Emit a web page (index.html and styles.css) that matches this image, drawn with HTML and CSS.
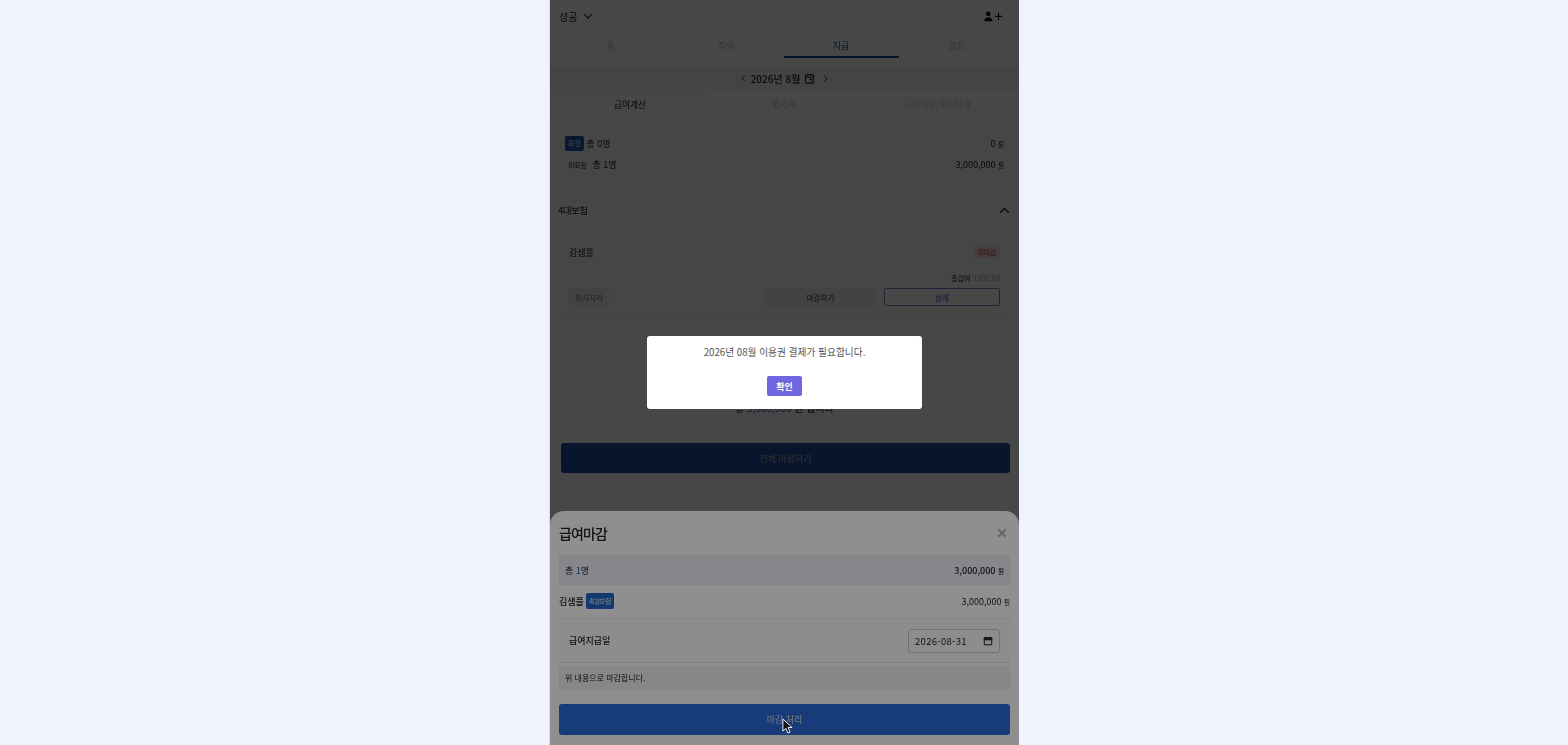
FILE: index.html
```html
<!DOCTYPE html>
<html lang="ko">
<head>
  <meta charset="UTF-8" />
  <meta name="viewport" content="width=device-width, initial-scale=1.0"/>
  <title>급여마감</title>
  <link rel="stylesheet" href="styles.css">
</head>
<body>
  <div class="phone">

    <div class="app">
      <header class="top">
        <div class="company">성공
          <svg class="icon-chev" viewBox="0 0 12 8"><path d="M1.5 1.5 6 6l4.5-4.5" /></svg>
        </div>
        <svg class="icon-user" viewBox="0 0 24 14">
          <circle cx="6" cy="3.6" r="3" />
          <path d="M.8 13c0-3.4 2.3-5 5.2-5s5.2 1.6 5.2 5z" />
          <path d="M19 2.2v9.2M14.4 6.8h9.2" class="plus" />
        </svg>
      </header>

      <nav class="tabs">
        <div class="tab">홈</div>
        <div class="tab">직원</div>
        <div class="tab active">지급</div>
        <div class="tab">설정</div>
      </nav>

      <div class="month">
        <svg class="icon-small" viewBox="0 0 8 12"><path d="M6 2 2 6l4 4" /></svg>
        <span>2026년 8월</span>
        <svg class="icon-cal" viewBox="0 0 12 12">
          <rect x="1.5" y="2" width="9" height="9" rx="1" />
          <path d="M1.5 4.6h9M4 .8v2M8 .8v2M6 7h2.5v2" />
        </svg>
        <svg class="icon-small next" viewBox="0 0 8 12"><path d="M2 2l4 4-4 4" /></svg>
      </div>

      <div class="segments">
        <div class="segment on">급여계산</div>
        <div class="segment">명세서</div>
        <div class="segment">급여대장/퇴직대장</div>
      </div>

      <section class="summary">
        <div class="sum-row">
          <div class="sum-left"><span class="chip-done">확정</span><span>총 0명</span></div>
          <div class="amount">0 <small>원</small></div>
        </div>
        <div class="sum-row">
          <div class="sum-left"><span class="chip-open">미확정</span><span>총 1명</span></div>
          <div class="amount">3,000,000 <small>원</small></div>
        </div>
      </section>

      <div class="group-head">
        <span>4대보험</span>
        <svg class="icon-up" viewBox="0 0 14 9"><path d="M1.5 7.5 7 2l5.5 5.5" /></svg>
      </div>

      <section class="emp-card">
        <div class="emp-top">
          <span class="emp-name">김샘플</span>
          <span class="badge-red">미마감</span>
        </div>
        <div class="emp-total"><b>총급여</b> <span>3,000,000</span></div>
        <div class="emp-actions">
          <button class="btn-gray small">퇴사처리</button>
          <div class="emp-right">
            <button class="btn-gray wide">마감하기</button>
            <button class="btn-line">상세</button>
          </div>
        </div>
      </section>

      <div class="grand-total">총 <em>3,000,000</em> 원 입니다</div>
      <button class="btn-all">전체 마감하기</button>
    </div>

    <div class="dim"></div>

    <section class="sheet">
      <div class="sheet-head">
        <h2>급여마감</h2>
        <svg class="icon-x" viewBox="0 0 12 12"><path d="M1.5 1.5l9 9M10.5 1.5l-9 9" /></svg>
      </div>
      <div class="sheet-sum">
        <span>총 <em>1</em>명</span>
        <span class="amount">3,000,000 <small>원</small></span>
      </div>
      <div class="sheet-emp">
        <div class="sum-left"><span class="emp-strong">김샘플</span><span class="chip-ins">4대보험</span></div>
        <span class="amount">3,000,000 <small>원</small></span>
      </div>
      <div class="pay-date">
        <label>급여지급일</label>
        <div class="date-field">2026-08-31
          <svg class="icon-date" viewBox="0 0 12 12">
            <path d="M1.5 2.5h9v8h-9z" />
            <path class="date-top" d="M1.5 2.2h9v2.4h-9z" />
            <path d="M3.6.8v1.6M8.4.8v1.6" />
          </svg>
        </div>
      </div>
      <div class="notice">위 내용으로 마감합니다.</div>
      <button class="btn-submit">마감 처리</button>
    </section>

    <div class="dim-top">
      <div class="alert">
        <p>2026년 08월 이용권 결제가 필요합니다.</p>
        <button class="btn-ok">확인</button>
      </div>
    </div>

    <svg class="cursor" viewBox="0 0 12 18">
      <path d="M1 1v13l3.2-3 2.2 5.2 2.4-1-2.2-5.1H11z" />
    </svg>
  </div>
</body>
</html>
```

FILE: styles.css
```css
* {
  box-sizing: border-box;
}
body {
  margin: 0;
  height: 745px;
  overflow: hidden;
  background: #eff3fe;
  font-family: "Noto Sans CJK KR", "Noto Sans", sans-serif;
  color: #222;
  display: flex;
  justify-content: center;
}
button {
  font-family: inherit;
  border: 0;
}
em {
  font-style: normal;
}
svg {
  fill: none;
  stroke: currentColor;
}
.phone {
  position: relative;
  width: 470px;
  height: 745px;
  overflow: hidden;
  background: #fff;
  border-left: 1px solid #ddd;
}
.app {
  height: 100%;
  filter: blur(0.7px);
}

/* header */
.top {
  height: 33px;
  padding: 0 16px 0 9px;
  display: flex;
  align-items: center;
  justify-content: space-between;
}
.company {
  display: flex;
  align-items: center;
  gap: 6px;
  font-size: 10px;
}
.icon-chev {
  width: 10px;
  height: 7px;
  stroke-width: 1.5;
}
.icon-user {
  width: 20px;
  height: 11px;
  fill: #111;
  stroke: none;
}
.icon-user .plus {
  stroke: #111;
  stroke-width: 1.4;
  fill: none;
}
.tabs {
  height: 25px;
  display: flex;
  padding: 0 5px 0 3px;
}
.tab {
  flex: 1;
  text-align: center;
  font-size: 9px;
  line-height: 25px;
  color: #c0c0c0;
}
.tab.active {
  color: #1f4fa0;
  border-bottom: 2px solid #1a4a9c;
}

/* month */
.month {
  margin-top: 8px;
  height: 24px;
  background: #f3f5f9;
  display: flex;
  align-items: center;
  justify-content: center;
  gap: 4px;
  font-size: 10px;
  font-weight: 500;
}
.icon-small {
  width: 7px;
  height: 9px;
  stroke-width: 1.3;
}
.icon-small.next {
  margin-left: 3px;
}
.icon-cal {
  width: 11px;
  height: 11px;
  stroke-width: 1.2;
}
.segments {
  margin: 3px 4px 0 3px;
  height: 24px;
  display: flex;
}
.segment {
  flex: 1;
  text-align: center;
  font-size: 8.7px;
  line-height: 24px;
  color: #c4c4c4;
}
.segment.on {
  background: #fff;
  color: #222;
  border-radius: 4px;
  box-shadow: 0 0 3px rgba(0,0,0,0.12);
}

/* summary */
.summary {
  margin: 13px 8px 0;
  height: 50px;
  padding: 3px 7px 0;
  background: #fafafa;
  border-radius: 4px;
}
.sum-row {
  display: flex;
  justify-content: space-between;
  align-items: center;
  height: 21px;
  font-size: 9px;
}
.sum-left {
  display: flex;
  align-items: center;
  gap: 2.5px;
}
.chip-done {
  background: #1d57b3;
  color: #dfe6f5;
  font-size: 7px;
  width: 19px;
  height: 15px;
  line-height: 15px;
  text-align: center;
  border-radius: 2px;
}
.chip-open {
  font-size: 6.5px;
  width: 25px;
  text-align: center;
  margin-right: 0;
}
.amount {
  font-size: 9px;
}
.amount small {
  font-size: 6.5px;
}

/* group */
.group-head {
  margin-top: 20px;
  padding: 0 9px 0 8px;
  height: 20px;
  display: flex;
  align-items: center;
  justify-content: space-between;
  font-size: 9.5px;
  letter-spacing: -0.5px;
}
.icon-up {
  width: 11px;
  height: 7px;
  stroke-width: 1.8;
}
.emp-card {
  margin: 18px 7px 0 8px;
  height: 80px;
  padding: 0 12px 0 11px;
  background: #fafafa;
  border-radius: 4px;
  box-shadow: 0 0 3px rgba(0,0,0,0.08);
}
.emp-top {
  height: 28px;
  display: flex;
  align-items: center;
  justify-content: space-between;
}
.emp-name {
  font-size: 9px;
}
.badge-red {
  background: #f8dede;
  color: #c33;
  font-size: 6.5px;
  padding: 2px 4px;
  border-radius: 2px;
}
.emp-total {
  margin-top: 6px;
  text-align: right;
  font-size: 7px;
  color: #aaa;
  height: 13px;
  line-height: 13px;
}
.emp-total b {
  font-weight: 500;
  color: #333;
}
.emp-total span {
  letter-spacing: -0.4px;
}
.emp-actions {
  margin-top: 3px;
  display: flex;
  justify-content: space-between;
  align-items: center;
}
.emp-right {
  display: flex;
  gap: 6px;
}
.btn-gray {
  background: #eef0f3;
  color: #777;
  font-size: 7.5px;
  height: 18px;
  border-radius: 2px;
  padding: 0;
}
.btn-gray.small {
  width: 40px;
}
.btn-gray.wide {
  width: 115px;
  color: #333;
}
.btn-line {
  width: 116px;
  height: 18px;
  background: #fff;
  border: 1px solid #6a8fc8;
  border-radius: 2px;
  color: #1a4a9c;
  font-size: 7.5px;
  padding: 0;
}
.grand-total {
  margin-top: 82px;
  text-align: center;
  font-size: 10px;
  height: 16px;
  line-height: 16px;
}
.grand-total em {
  color: #1a4a9c;
}
.btn-all {
  display: block;
  margin: 27px 0 0 11px;
  width: 449px;
  height: 30px;
  background: #1f4fa0;
  color: #b4b4b4;
  font-size: 9px;
  border-radius: 3px;
}

/* overlays */
.dim {
  position: absolute;
  inset: 0;
  background: rgba(0,0,0,0.5);
}
.sheet {
  position: absolute;
  left: 0;
  right: 0;
  bottom: 0;
  height: 234px;
  background: #fff;
  border-radius: 14px 14px 0 0;
  padding: 0 9px;
  filter: blur(0.4px);
}
.sheet-head {
  height: 44px;
  display: flex;
  align-items: center;
  justify-content: space-between;
}
.sheet-head h2 {
  margin: 0;
  font-size: 14px;
  font-weight: 500;
  letter-spacing: -0.9px;
}
.icon-x {
  width: 10px;
  height: 10px;
  stroke: #b4b4b4;
  stroke-width: 2.2;
  margin-right: 3px;
}
.sheet-sum {
  height: 30px;
  padding: 0 6px;
  background: #eef0f8;
  display: flex;
  align-items: center;
  justify-content: space-between;
  font-size: 9px;
}
.sheet-sum em {
  color: #1a4a9c;
}
.sheet-sum .amount {
  font-weight: 500;
}
.sheet-emp {
  height: 33px;
  padding-bottom: 1px;
  display: flex;
  align-items: center;
  justify-content: space-between;
  font-size: 9px;
}
.chip-ins {
  background: #2367c8;
  color: #dfe6f5;
  font-size: 7px;
  height: 16px;
  line-height: 16px;
  padding: 0 3px;
  border-radius: 2px;
  letter-spacing: -0.4px;
}
.emp-strong {
  font-weight: 500;
}
.pay-date {
  height: 45px;
  padding: 0 10px;
  background: #fbfbfb;
  border-top: 1px solid #eee;
  border-bottom: 1px solid #e4e4e4;
  display: flex;
  align-items: center;
  justify-content: space-between;
  font-size: 9px;
  font-weight: 500;
}
.date-field {
  width: 92px;
  height: 24px;
  padding: 0 6px;
  border: 1px solid #ccc;
  border-radius: 3px;
  display: flex;
  align-items: center;
  justify-content: space-between;
  font-size: 9.5px;
  font-weight: 400;
  letter-spacing: 0.3px;
}
.icon-date {
  width: 10px;
  height: 10px;
  stroke: #222;
  stroke-width: 1.2;
}
.date-top {
  fill: #222;
}
.notice {
  margin-top: 3px;
  height: 24px;
  line-height: 24px;
  padding: 0 6px;
  background: #eef0f5;
  border-radius: 2px;
  font-size: 8px;
}
.btn-submit {
  display: block;
  margin-top: 14px;
  width: 100%;
  height: 31px;
  background: #2a6bd8;
  color: #ddd;
  font-size: 9px;
  border-radius: 3px;
}
.dim-top {
  position: absolute;
  inset: 0;
  background: rgba(0,0,0,0.44);
  display: flex;
  align-items: center;
  justify-content: center;
}
.alert {
  width: 275px;
  height: 73px;
  background: #fff;
  border-radius: 3px;
  display: flex;
  flex-direction: column;
  align-items: center;
}
.alert p {
  margin: 9px 0 0;
  font-size: 9.7px;
  line-height: 15px;
  color: #545454;
}
.btn-ok {
  margin-top: 16px;
  width: 35px;
  height: 20px;
  padding: 0;
  background: #7066e0;
  color: #fff;
  font-size: 9px;
  font-weight: 700;
  border-radius: 2px;
}
.cursor {
  position: absolute;
  left: 232px;
  top: 718px;
  width: 11px;
  height: 17px;
  fill: #111;
  stroke: #fff;
  stroke-width: 1;
}
```
